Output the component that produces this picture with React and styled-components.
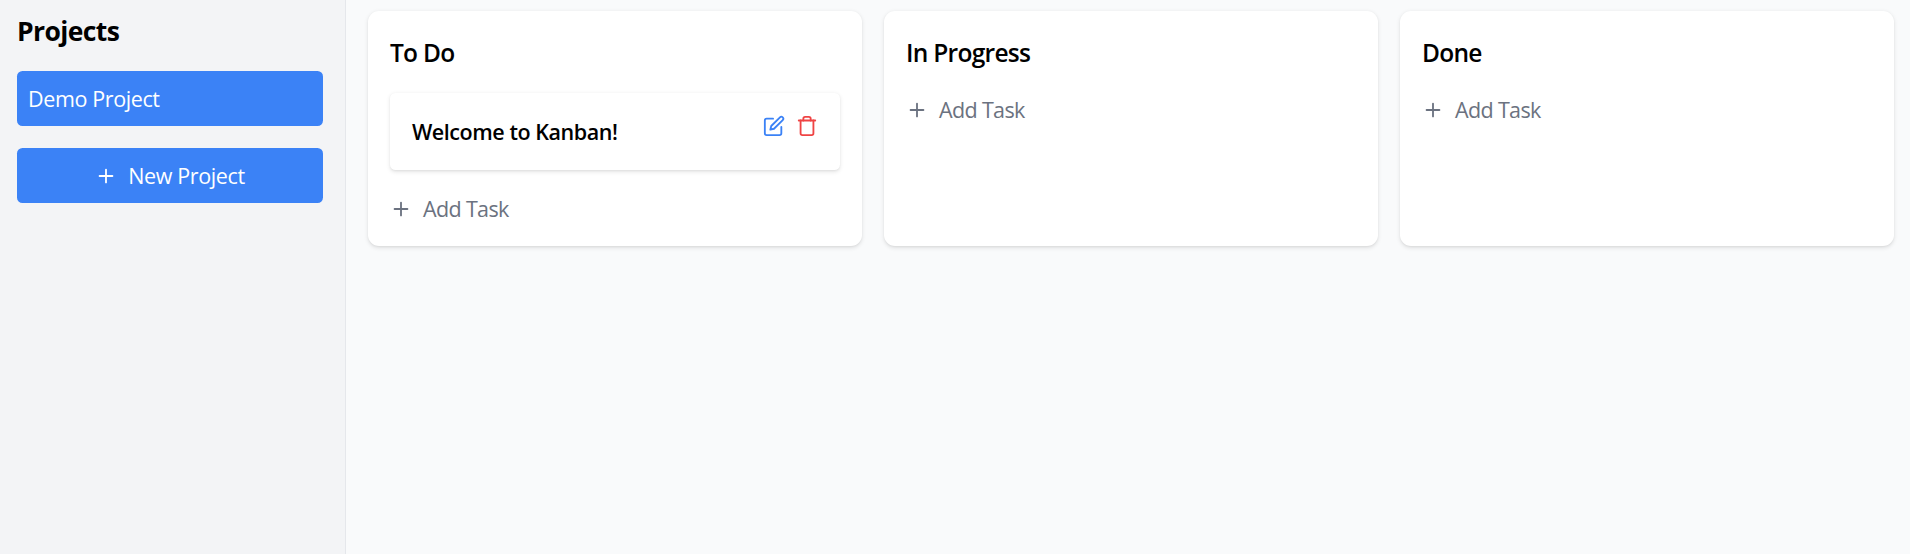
import React from "react";
import styled, { createGlobalStyle } from "styled-components";
import { FiEdit, FiPlus, FiTrash } from "react-icons/fi";

const GlobalStyle = createGlobalStyle`
  *, *::before, *::after { box-sizing: border-box; }
  body {
    margin: 0;
    background: #f9fafb;
    color: #000;
    font-family: "Open Sans", "Noto Sans", sans-serif;
    font-size: 21.5px;
    line-height: 33px;
  }
  h1, h2, h3 { margin: 0; }
  button { font: inherit; border: 0; cursor: pointer; }
  svg { display: block; flex: none; }
`;

const Layout = styled.div`
  display: flex;
  height: 100vh;
  overflow: hidden;
`;

const Sidebar = styled.aside`
  flex: none;
  width: 346px;
  padding: 11px 22px 11px 17px;
  background: #f3f4f6;
  border-right: 1px solid #e5e7eb;
`;

const SidebarTitle = styled.h1`
  margin-bottom: 20px;
  font-size: 26.5px;
  font-weight: 700;
  line-height: 40px;
  letter-spacing: -0.6px;
`;

const ProjectButton = styled.button`
  display: flex;
  align-items: center;
  justify-content: ${({ $centered }) => ($centered ? "center" : "flex-start")};
  gap: 11px;
  width: 100%;
  height: 55px;
  margin-bottom: 22px;
  padding: 0 11px;
  border-radius: 5.5px;
  background: #3b82f6;
  color: #fff;
  letter-spacing: -0.38px;
`;

const Board = styled.main`
  flex: 1;
  display: grid;
  grid-template-columns: repeat(3, 1fr);
  align-items: stretch;
  align-content: start;
  gap: 22px;
  padding: 11px 16px 11px 22px;
`;

const Column = styled.section`
  padding: 22px 22px 21px;
  border-radius: 11px;
  background: #fff;
  box-shadow: 0 1.4px 4px rgba(0, 0, 0, 0.1), 0 1.4px 2.75px -1.4px rgba(0, 0, 0, 0.1);
`;

const ColumnTitle = styled.h2`
  margin-bottom: 20px;
  font-size: 24.5px;
  font-weight: 600;
  line-height: 40px;
  letter-spacing: -0.72px;
`;

const TaskCard = styled.article`
  display: flex;
  align-items: flex-start;
  justify-content: space-between;
  margin-bottom: 22px;
  padding: 22px;
  border-radius: 5.5px;
  background: #fff;
  box-shadow: 0 1.4px 4px rgba(0, 0, 0, 0.1), 0 1.4px 2.75px -1.4px rgba(0, 0, 0, 0.1);
`;

const TaskTitle = styled.h3`
  font-size: 21.5px;
  font-weight: 600;
  letter-spacing: -0.45px;
`;

const TaskActions = styled.div`
  display: flex;
  gap: 11px;
`;

const IconButton = styled.button`
  padding: 0;
  background: none;
  color: ${({ $color }) => $color};
`;

const AddTaskButton = styled.button`
  display: flex;
  align-items: center;
  gap: 11px;
  padding: 0;
  background: none;
  color: #6b7280;
  letter-spacing: -0.65px;
`;

const columns = [
  { title: "To Do", tasks: ["Welcome to Kanban!"] },
  { title: "In Progress", tasks: [] },
  { title: "Done", tasks: [] },
];

export default function App() {
  return (
    <Layout>
      <GlobalStyle />
      <Sidebar>
        <SidebarTitle>Projects</SidebarTitle>
        <ProjectButton>Demo Project</ProjectButton>
        <ProjectButton $centered>
          <FiPlus size={22} />
          <span>New Project</span>
        </ProjectButton>
      </Sidebar>
      <Board>
        {columns.map(({ title, tasks }) => (
          <Column key={title}>
            <ColumnTitle>{title}</ColumnTitle>
            {tasks.map((task) => (
              <TaskCard key={task}>
                <TaskTitle>{task}</TaskTitle>
                <TaskActions>
                  <IconButton $color="#3b82f6" aria-label="Edit task">
                    <FiEdit size={22} />
                  </IconButton>
                  <IconButton $color="#ef4444" aria-label="Delete task">
                    <FiTrash size={22} />
                  </IconButton>
                </TaskActions>
              </TaskCard>
            ))}
            <AddTaskButton>
              <FiPlus size={22} />
              <span>Add Task</span>
            </AddTaskButton>
          </Column>
        ))}
      </Board>
    </Layout>
  );
}
